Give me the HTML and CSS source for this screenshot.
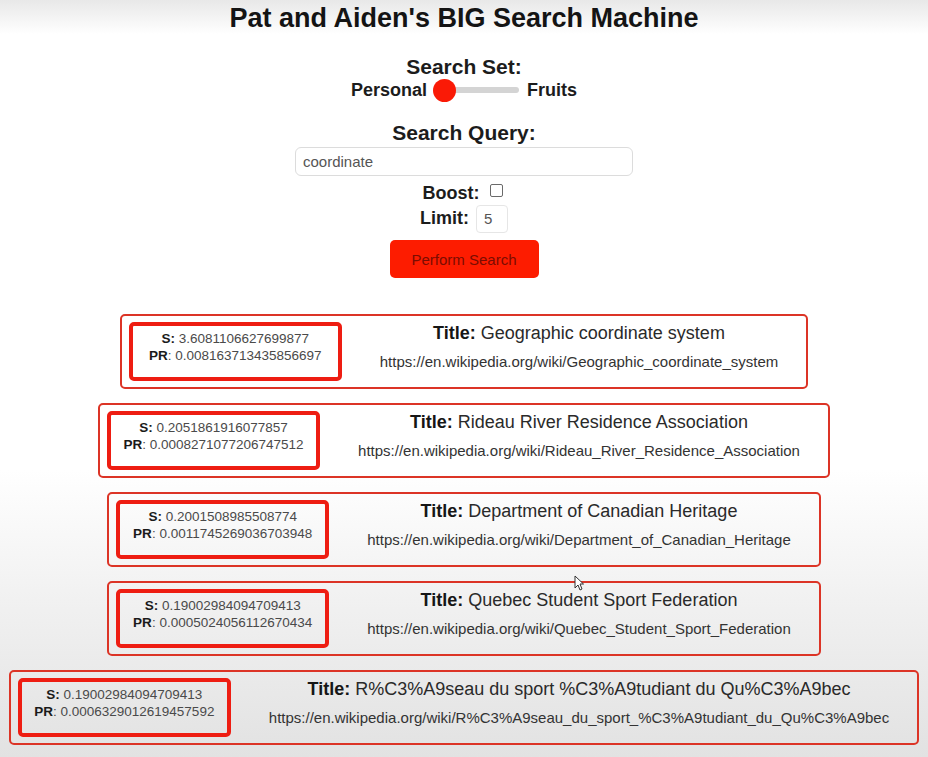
FILE: index.html
```html
<!DOCTYPE html>
<html lang="en">
<head>
<meta charset="utf-8">
<title>Pat and Aiden's BIG Search Machine</title>
<link rel="stylesheet" href="styles.css">
</head>
<body>
<main class="page">
  <h1 class="app-title">Pat and Aiden's BIG Search Machine</h1>

  <section class="controls">
    <h3 class="label-lg">Search Set:</h3>
    <div class="set-row">
      <span class="label-sm">Personal</span>
      <input class="set-slider" type="range" min="0" max="1" value="0">
      <span class="label-sm">Fruits</span>
    </div>

    <h3 class="label-lg query-label">Search Query:</h3>
    <input class="query-input" type="text" value="coordinate">

    <div class="boost-row">
      <span class="label-sm">Boost:</span>
      <span class="checkbox"></span>
    </div>
    <div class="limit-row">
      <span class="label-sm">Limit:</span>
      <span class="limit-input">5</span>
    </div>

    <button class="search-btn" type="button">Perform Search</button>
  </section>

  <section class="results">
    <div class="card">
      <div class="scores">
        <div><b>S:</b> 3.6081106627699877</div>
        <div><b>PR</b>: 0.008163713435856697</div>
      </div>
      <div class="info">
        <div class="title"><b>Title:</b> Geographic coordinate system</div>
        <div class="url">https://en.wikipedia.org/wiki/Geographic_coordinate_system</div>
      </div>
    </div>

    <div class="card">
      <div class="scores">
        <div><b>S:</b> 0.2051861916077857</div>
        <div><b>PR</b>: 0.0008271077206747512</div>
      </div>
      <div class="info">
        <div class="title"><b>Title:</b> Rideau River Residence Association</div>
        <div class="url">https://en.wikipedia.org/wiki/Rideau_River_Residence_Association</div>
      </div>
    </div>

    <div class="card">
      <div class="scores">
        <div><b>S:</b> 0.2001508985508774</div>
        <div><b>PR</b>: 0.0011745269036703948</div>
      </div>
      <div class="info">
        <div class="title"><b>Title:</b> Department of Canadian Heritage</div>
        <div class="url">https://en.wikipedia.org/wiki/Department_of_Canadian_Heritage</div>
      </div>
    </div>

    <div class="card">
      <div class="scores">
        <div><b>S:</b> 0.19002984094709413</div>
        <div><b>PR</b>: 0.0005024056112670434</div>
      </div>
      <div class="info">
        <div class="title"><b>Title:</b> Quebec Student Sport Federation</div>
        <div class="url">https://en.wikipedia.org/wiki/Quebec_Student_Sport_Federation</div>
      </div>
    </div>

    <div class="card">
      <div class="scores">
        <div><b>S:</b> 0.19002984094709413</div>
        <div><b>PR</b>: 0.0006329012619457592</div>
      </div>
      <div class="info">
        <div class="title"><b>Title:</b> R%C3%A9seau du sport %C3%A9tudiant du Qu%C3%A9bec</div>
        <div class="url">https://en.wikipedia.org/wiki/R%C3%A9seau_du_sport_%C3%A9tudiant_du_Qu%C3%A9bec</div>
      </div>
    </div>
  </section>

  <svg class="cursor" width="10" height="16" viewBox="0 0 10 16" aria-hidden="true">
    <path d="M1 1 L1 13 L4 10 L6 15 L8 14 L6 9 L9.5 9 Z" fill="#fff" stroke="#333" stroke-width="1"/>
  </svg>
</main>
</body>
</html>
```

FILE: styles.css
```css
html, body {
  margin: 0;
  padding: 0;
}

body {
  width: 928px;
  min-height: 757px;
  font-family: "Liberation Sans", Arial, sans-serif;
  color: #1a1a1a;
  background: linear-gradient(to bottom,
    #e8e8e8 0px, #ffffff 34px, #ffffff 470px, #f1f1f1 600px, #e2e2e2 757px);
}

.page {
  position: relative;
  display: flex;
  flex-direction: column;
  align-items: center;
  min-height: 757px;
}

.app-title {
  margin: 2px 0 0;
  font-size: 27px;
  line-height: 32px;
  font-weight: bold;
  color: #141414;
}

.controls {
  display: flex;
  flex-direction: column;
  align-items: center;
}

.label-lg {
  margin: 21px 0 0;
  font-size: 21px;
  line-height: 24px;
  font-weight: bold;
  color: #1c1c1c;
}

.query-label {
  margin-top: 20px;
}

.label-sm {
  font-size: 18px;
  font-weight: bold;
  color: #1c1c1c;
}

.set-row {
  display: flex;
  align-items: center;
  height: 22px;
}

.set-slider {
  -webkit-appearance: none;
  appearance: none;
  width: 86px;
  height: 22px;
  margin: 0 8px 0 6px;
  padding: 0;
  background: transparent;
}

.set-slider::-webkit-slider-runnable-track {
  height: 6px;
  border-radius: 3px;
  background: #d4d4d4;
}

.set-slider::-webkit-slider-thumb {
  -webkit-appearance: none;
  appearance: none;
  width: 23px;
  height: 23px;
  margin-top: -8.5px;
  border-radius: 50%;
  background: #fa1a06;
  border: none;
}

.query-input {
  box-sizing: border-box;
  width: 338px;
  height: 29px;
  margin: 2px 0 0;
  padding: 0 7px;
  border: 1px solid #dcdcdc;
  border-radius: 6px;
  background: #fff;
  font-family: "Liberation Sans", Arial, sans-serif;
  font-size: 15px;
  color: #555;
  outline: none;
}

.boost-row {
  display: flex;
  align-items: center;
  gap: 10px;
  height: 20px;
  margin-top: 7px;
  margin-left: -3px;
}

.checkbox {
  box-sizing: border-box;
  width: 13px;
  height: 13px;
  margin-top: -5px;
  border: 1px solid #6a6a6a;
  border-radius: 2px;
  background: #fff;
}

.limit-row {
  display: flex;
  align-items: center;
  gap: 7px;
  height: 29px;
  margin-top: 1px;
}

.limit-input {
  box-sizing: border-box;
  width: 32px;
  height: 28px;
  padding: 4px 0 0 7px;
  border: 1px solid #e6e6e6;
  border-radius: 4px;
  background: #fff;
  font-size: 15px;
  color: #555;
}

.search-btn {
  box-sizing: border-box;
  width: 149px;
  height: 38px;
  margin-top: 7px;
  border: none;
  border-radius: 5px;
  background: #fd1c00;
  color: #7a0c02;
  font-family: "Liberation Sans", Arial, sans-serif;
  font-size: 15px;
}

.results {
  display: flex;
  flex-direction: column;
  align-items: center;
  margin-top: 36px;
}

.card {
  box-sizing: border-box;
  display: flex;
  align-items: flex-start;
  height: 75px;
  margin-bottom: 14px;
  padding: 6px 7px;
  border: 2px solid #dc3426;
  border-radius: 5px;
}

.scores {
  box-sizing: border-box;
  flex: none;
  width: 213px;
  height: 59px;
  padding-top: 5px;
  border: 4px solid #ee1d12;
  border-radius: 5px;
  text-align: center;
  font-size: 13.5px;
  line-height: 16.5px;
  color: #4a4a4a;
}

.scores b {
  color: #1a1a1a;
}

.info {
  padding: 0 21px 0 38px;
  text-align: center;
  white-space: nowrap;
}

.title {
  font-size: 18px;
  line-height: 22px;
  color: #2a2a2a;
}

.title b {
  color: #161616;
}

.url {
  margin-top: 9px;
  font-size: 15px;
  line-height: 18px;
  color: #333;
}

.cursor {
  position: absolute;
  left: 574px;
  top: 575px;
}
```
